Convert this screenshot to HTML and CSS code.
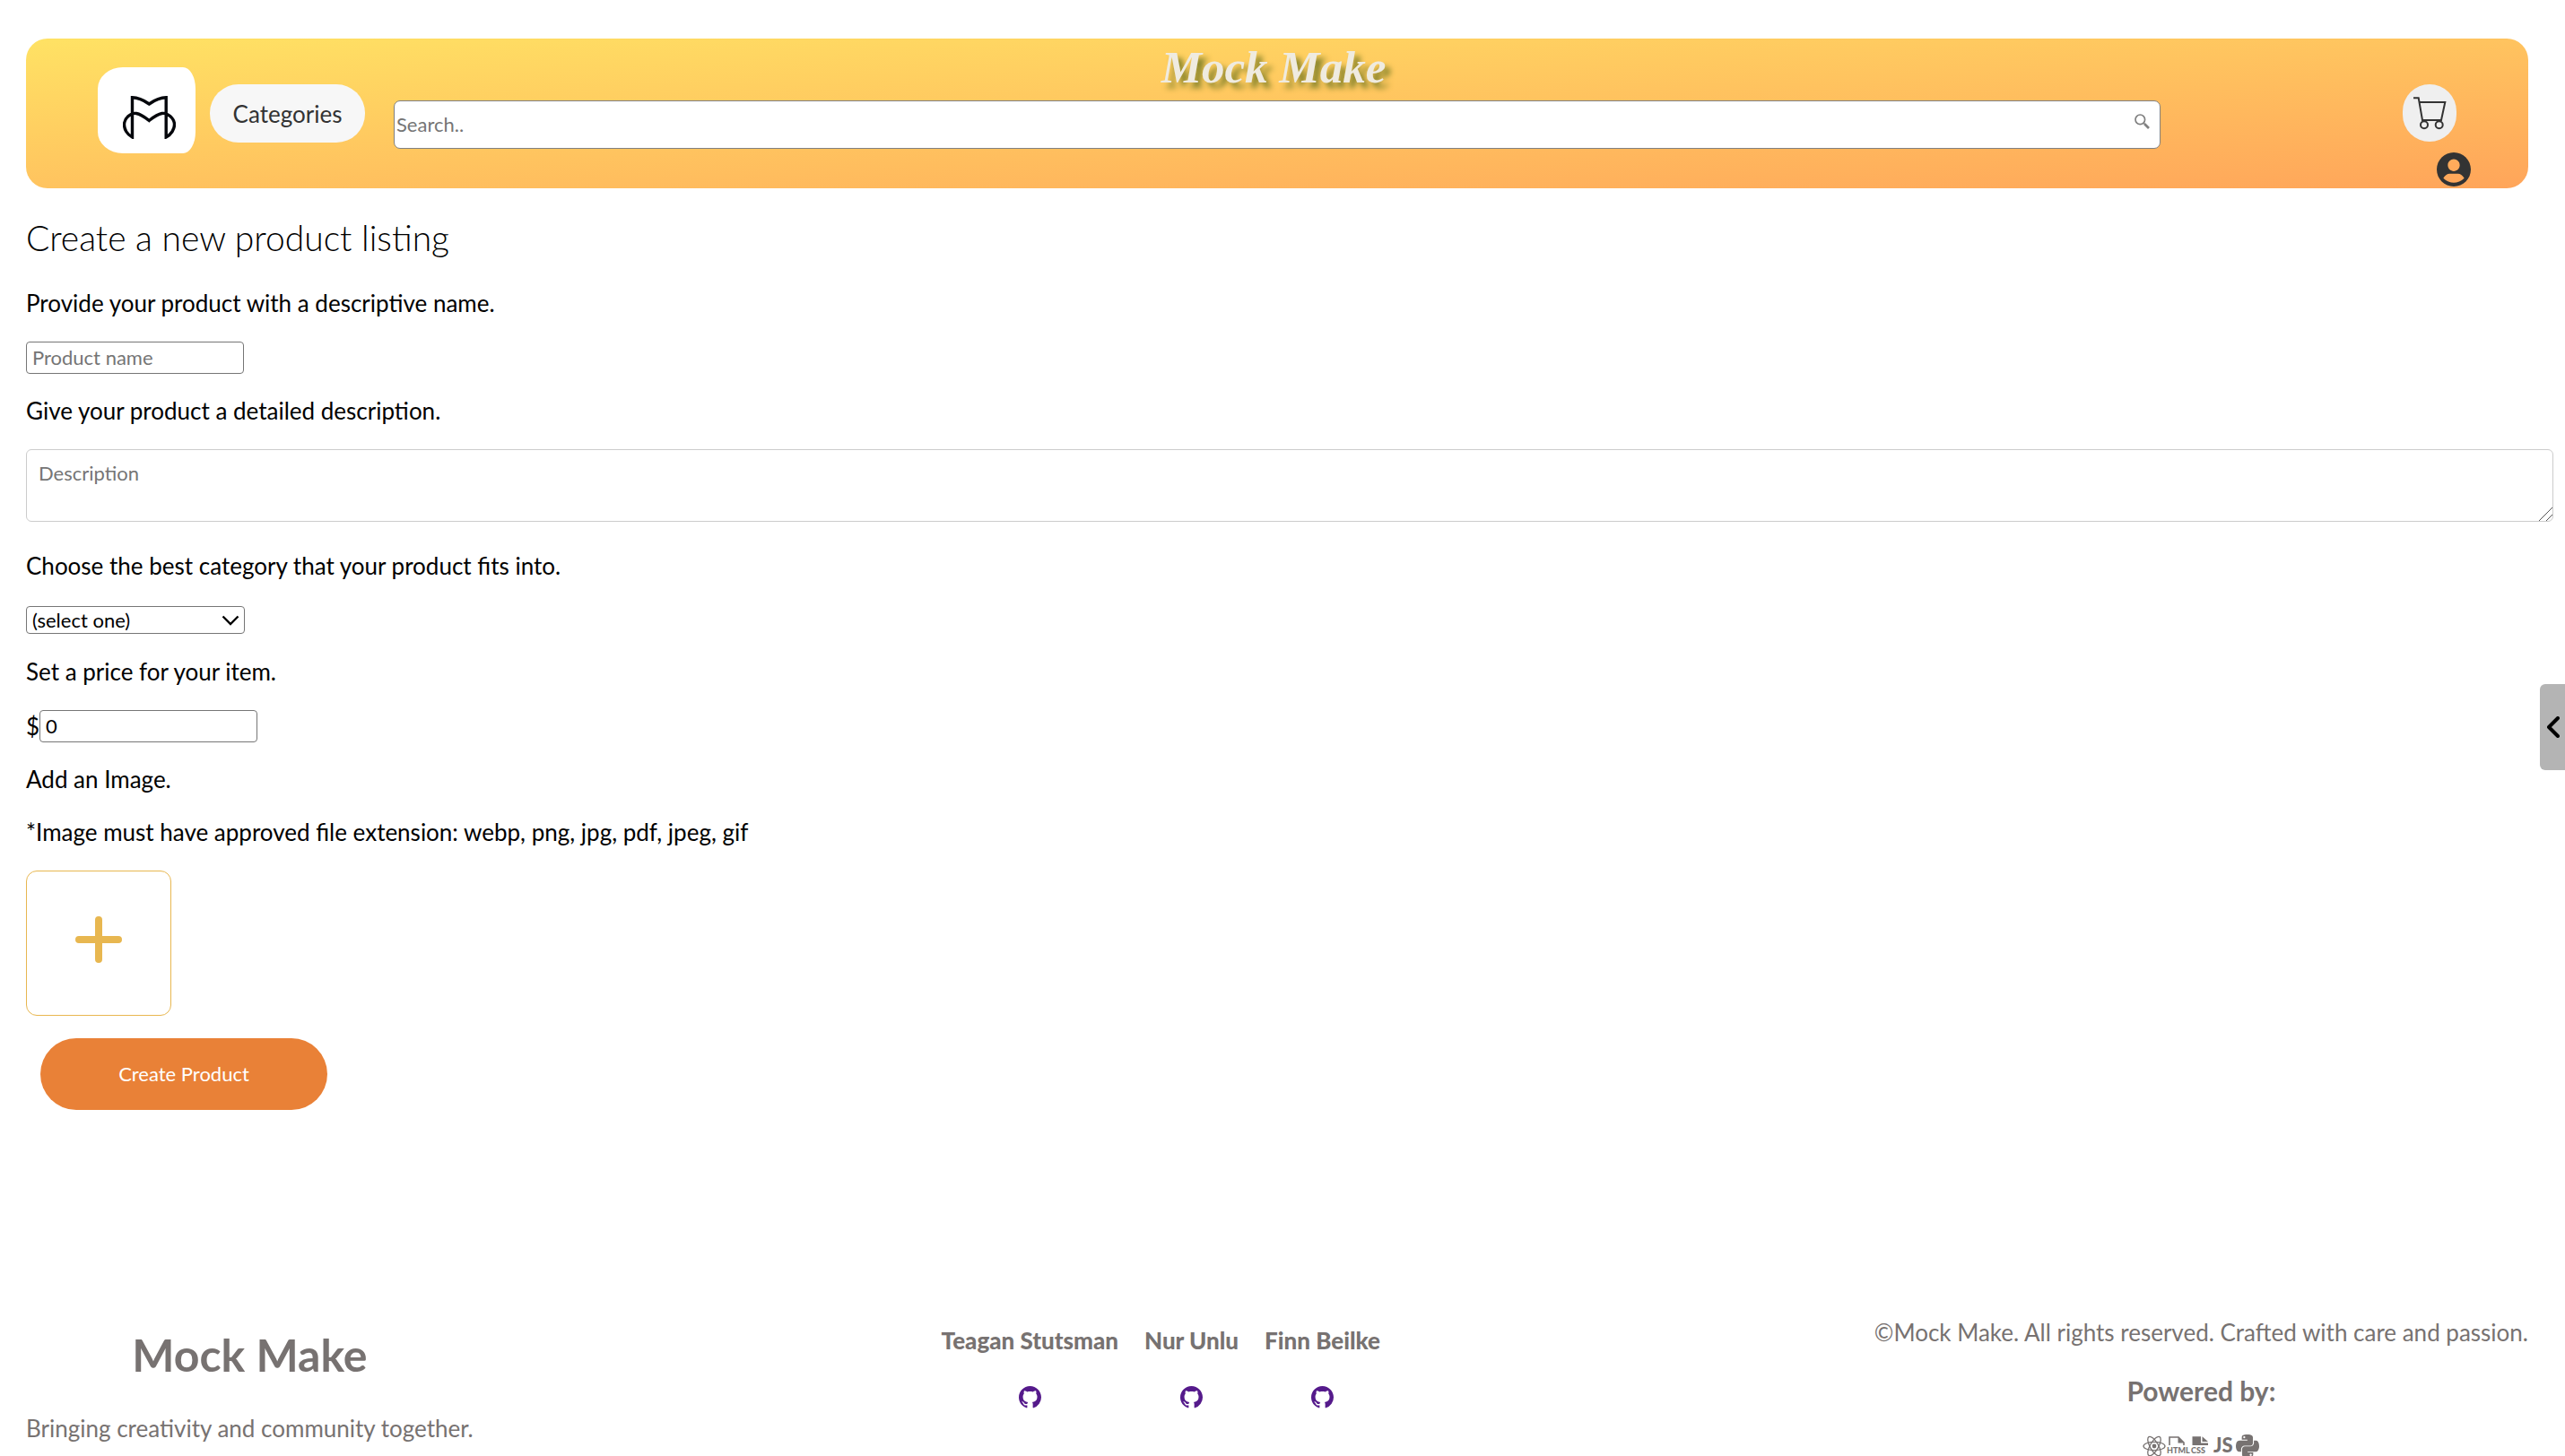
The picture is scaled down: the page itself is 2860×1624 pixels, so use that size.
FILE: index.html
```html
<!DOCTYPE html>
<html lang="en">
<head>
<meta charset="utf-8">
<title>Mock Make</title>
<link rel="stylesheet" href="styles.css">
</head>
<body>
<header class="topbar">
  <a class="logo" href="#" aria-label="Home">
    <svg width="59" height="48" viewBox="0 0 59 48" fill="none" stroke="#05070c" stroke-width="3.4"><path d="M10.5 46V1.8Q19 1.8 29.3 9Q39.500 1.800 48.200 1.800V46C54 43 57.500 37 57.500 32C57.500 25 50 18.500 43.500 19.500C38 20.500 35 23 29.300 27.500C23.500 23 20.500 20.500 15 19.500C8.500 18.500 1.500 25 1.500 32C1.500 37 4.500 43 10.500 46Z"/></svg>
  </a>
  <button class="categories" type="button">Categories</button>
  <div class="center">
    <div class="brand">Mock Make</div>
    <form class="search">
      <input type="search" placeholder="Search.." aria-label="Search">
      <button type="button" aria-label="Submit search">
        <svg width="17" height="17" viewBox="0 0 17 17" fill="none" stroke="#808080"><circle cx="6.300" cy="6.300" r="5.300" stroke-width="1.700"/><path d="M10 10l1.500 1.500" stroke-width="1.700"/><path d="M11.200 11.200L16 16" stroke-width="2.700"/></svg>
      </button>
    </form>
  </div>
  <div class="actions">
    <button class="cart" type="button" aria-label="Cart">
      <svg width="37" height="37" viewBox="0 0 37 37" fill="none" stroke="#333" stroke-width="2"><path d="M0 1.300H5.700L10 26H31L35.300 6H7"/><circle cx="12" cy="31.300" r="4"/><circle cx="28.700" cy="31.300" r="4"/></svg>
    </button>
    <a class="account" href="#" aria-label="Account">
      <svg width="38" height="38" viewBox="2 2 20 20" fill="#333"><path d="M12 2C6.480 2 2 6.480 2 12s4.480 10 10 10 10-4.480 10-10S17.520 2 12 2zm0 4c1.930 0 3.500 1.570 3.500 3.500S13.930 13 12 13s-3.500-1.570-3.500-3.500S10.070 6 12 6zm0 13.700c-2.030 0-4.400-.7-6.140-2.600C7 15.300 8.200 14.500 9.500 14.500h5c1.300 0 2.500.8 3.640 2.600C16.400 19 14.030 19.700 12 19.700z"/></svg>
    </a>
  </div>
</header>

<main>
  <h1>Create a new product listing</h1>
  <form class="listing">
    <div class="field">
      <label for="name">Provide your product with a descriptive name.</label>
      <input class="box" id="name" type="text" placeholder="Product name">
    </div>
    <div class="field">
      <label for="description">Give your product a detailed description.</label>
      <textarea id="description" placeholder="Description"></textarea>
    </div>
    <div class="field">
      <label for="category">Choose the best category that your product fits into.</label>
      <div class="picker">
        <select id="category"><option>(select one)</option></select>
        <svg width="20" height="12" viewBox="0 0 20 12" fill="none" stroke="#000" stroke-width="2.400"><path d="M1.500 1.500L10 10L18.500 1.500"/></svg>
      </div>
    </div>
    <div class="field">
      <label for="price">Set a price for your item.</label>
      <div class="price"><span>$</span><input class="box" id="price" type="text" inputmode="decimal" value="0"></div>
    </div>
    <div class="field">
      <label for="image">Add an Image.</label>
      <p>*Image must have approved file extension: webp, png, jpg, pdf, jpeg, gif</p>
      <button class="upload" id="image" type="button" aria-label="Add an image">
        <svg width="52" height="52" viewBox="0 0 52 52" stroke="#e8b750" stroke-width="8" stroke-linecap="round"><path d="M26 4V48M4 26H48"/></svg>
      </button>
    </div>
    <button class="create" type="submit">Create Product</button>
  </form>
</main>

<footer>
  <section class="about">
    <h2>Mock Make</h2>
    <p>Bringing creativity and community together.</p>
  </section>
  <ul class="team">
    <li><strong>Teagan Stutsman</strong><a href="#" aria-label="Teagan Stutsman on GitHub"><svg width="25" height="25" viewBox="0 0 16 16"><use href="#github"/></svg></a></li>
    <li><strong>Nur Unlu</strong><a href="#" aria-label="Nur Unlu on GitHub"><svg width="25" height="25" viewBox="0 0 16 16"><use href="#github"/></svg></a></li>
    <li><strong>Finn Beilke</strong><a href="#" aria-label="Finn Beilke on GitHub"><svg width="25" height="25" viewBox="0 0 16 16"><use href="#github"/></svg></a></li>
  </ul>
  <section class="powered">
    <p>©Mock Make. All rights reserved. Crafted with care and passion.</p>
    <h3>Powered by:</h3>
    <div class="stack">
      <svg viewBox="0 0 26 26" fill="none" stroke="currentColor" stroke-width="1.300"><circle cx="13" cy="13" r="2.400" fill="currentColor" stroke="none"/><ellipse cx="13" cy="13" rx="12" ry="4.600"/><ellipse cx="13" cy="13" rx="12" ry="4.600" transform="rotate(60 13 13)"/><ellipse cx="13" cy="13" rx="12" ry="4.600" transform="rotate(120 13 13)"/></svg>
      <svg viewBox="0 0 26 26" fill="currentColor"><path d="M4 12V3H14L20 9V12" fill="none" stroke="currentColor" stroke-width="1.600"/><path d="M13.500 3V9.500H20Z"/><text x="1" y="21" font-size="9">HTML</text></svg>
      <svg viewBox="0 0 26 26" fill="currentColor"><path d="M3.500 12V2.200H13V9.500H21V12Z"/><path d="M14.500 2.200L21 8H14.500Z"/><text x="2" y="21" font-size="9">CSS</text></svg>
      <svg viewBox="0 0 26 26" fill="currentColor"><text x="1" y="20" font-size="22">JS</text></svg>
      <svg viewBox="0 32 448 448" fill="currentColor"><path d="M439.800 200.500c-7.700-30.900-22.300-54.200-53.400-54.200h-40.100v47.400c0 36.800-31.200 67.800-66.800 67.800H172.700c-29.200 0-53.400 25-53.400 54.300v101.800c0 29 25.200 46 53.400 54.300 33.800 9.900 66.300 11.700 106.800 0 26.900-7.800 53.400-23.500 53.400-54.300v-40.700H226.200v-13.600h160.200c31.100 0 42.600-21.700 53.400-54.200 11.200-33.500 10.700-65.700 0-108.600zM286.200 404c11.100 0 20.100 9.100 20.100 20.300 0 11.300-9 20.400-20.100 20.400-11 0-20.100-9.200-20.100-20.400.1-11.300 9.100-20.300 20.100-20.300zM167.800 248.100h106.800c29.700 0 53.400-24.500 53.400-54.300V91.900c0-29-24.400-50.700-53.400-55.600-35.800-5.900-74.700-5.600-106.800.1-45.200 8-53.400 24.700-53.400 55.600v40.700h106.900v13.600h-147c-31.100 0-58.300 18.700-66.800 54.200-9.800 40.700-10.200 66.100 0 108.600 7.600 31.600 25.700 54.200 56.800 54.200H101v-48.800c0-35.300 30.500-66.400 66.800-66.400zm-6.700-142.600c-11.100 0-20.100-9.100-20.100-20.300.1-11.300 9-20.400 20.100-20.400 11 0 20.100 9.200 20.100 20.400s-9 20.300-20.100 20.300z"/></svg>
    </div>
  </section>
</footer>

<button class="drawer" type="button" aria-label="Open side panel">
  <svg width="14" height="24" viewBox="0 0 14 24" fill="none" stroke="#000" stroke-width="4" stroke-linecap="round" stroke-linejoin="round"><path d="M12 2L2 12L12 22"/></svg>
</button>

<svg width="0" height="0" class="defs" aria-hidden="true"><symbol id="github" viewBox="0 0 16 16"><path fill-rule="evenodd" d="M8 0C3.580 0 0 3.580 0 8c0 3.540 2.290 6.530 5.470 7.590.4.070.55-.17.55-.38 0-.19-.01-.82-.01-1.490-2.010.37-2.530-.49-2.690-.94-.09-.23-.48-.94-.82-1.130-.28-.15-.68-.52-.01-.53.63-.01 1.080.58 1.230.82.72 1.210 1.870.87 2.330.66.070-.52.28-.87.51-1.070-1.780-.2-3.640-.89-3.640-3.950 0-.87.31-1.590.82-2.150-.08-.2-.36-1.020.08-2.120 0 0 .67-.21 2.200.82.64-.18 1.320-.27 2-.27s1.360.09 2 .27c1.530-1.040 2.200-.82 2.200-.82.44 1.100.16 1.920.08 2.120.51.56.82 1.270.82 2.150 0 3.070-1.870 3.750-3.650 3.950.29.25.54.73.54 1.480 0 1.070-.01 1.930-.01 2.200 0 .21.15.46.55.38A8.010 8.010 0 0 0 16 8c0-4.420-3.580-8-8-8z"/></symbol></svg>
</body>
</html>
```
FILE: styles.css
```css
* { box-sizing: border-box; }

html { overflow: hidden; }

body {
  height: 100vh;
  margin: 0;
  padding-top: 43px;
  overflow-y: auto;
  scrollbar-width: none;
  background: #fff;
  color: #000;
  font: 26px/32px Lato, "Open Sans", sans-serif;
}

h1, h2, h3, p, ul { margin: 0; padding: 0; }
svg { display: block; flex: none; }
button, input, select, textarea { font: inherit; margin: 0; }
button { border: 0; padding: 0; cursor: pointer; }
::placeholder { color: #757575; opacity: 1; }
.defs { position: absolute; }

/* Header */
.topbar {
  display: flex;
  align-items: flex-start;
  height: 167px;
  margin: 0 41px 0 29px;
  padding: 0 64px 0 80px;
  border-radius: 24px;
  background: linear-gradient(to bottom right, #ffe264, #ffa55a);
}
.logo {
  display: flex;
  justify-content: center;
  width: 109px;
  height: 96px;
  margin-top: 32px;
  padding: 32px 0 0 6px;
  border-radius: 28px 14px 14px 28px / 24px;
  background: #fff;
}
.categories {
  width: 173px;
  height: 65px;
  margin: 51px 32px 0 16px;
  border-radius: 32px;
  background: #f7f7f7;
  color: #333;
}
.center { flex: 1; margin-right: 270px; }
.brand {
  height: 69px;
  padding-right: 8px;
  font: italic bold 51px/64px "Brush Script MT", "Liberation Serif", cursive;
  text-align: center;
  color: #efebe0;
  text-shadow: 6px 6px 6px #808028;
}
.search {
  display: flex;
  height: 54px;
  padding: 0 11px 0 2px;
  border: 1px solid #808080;
  border-radius: 7px;
  background: #fff;
}
.search input {
  flex: 1;
  border: 0;
  padding: 0;
  background: none;
  font-size: 22px;
  outline: 0;
}
.search button { height: 17px; margin-top: 14px; background: none; }
.actions { width: 76px; padding-top: 51px; }
.cart {
  display: grid;
  place-items: center;
  width: 60px;
  height: 64px;
  border-radius: 30px;
  background: #efefef;
}
.account { display: block; width: 38px; margin: 12px 0 0 38px; }

/* Listing form */
main { padding: 31px 13px 0 29px; }
h1 { margin-bottom: 33px; font-size: 39px; line-height: 48px; font-weight: 300; }
.listing { display: flex; flex-direction: column; align-items: flex-start; gap: 25px; }
.field { display: flex; flex-direction: column; align-items: flex-start; gap: 27px; width: 100%; }
.box {
  width: 243px;
  height: 36px;
  padding: 0 6px 2px;
  border: 1px solid #767676;
  border-radius: 4px;
  background: #fff;
  font-size: 22px;
}
textarea {
  width: 100%;
  height: 81px;
  margin-bottom: 8px;
  padding: 10px 13px;
  border: 1px solid #ccc;
  border-radius: 6px;
  font-size: 22px;
}
textarea::-webkit-resizer {
  background: linear-gradient(135deg, transparent 47%, #555 47% 53%, transparent 53% 74%, #555 74% 80%, transparent 80%);
}
.picker { display: grid; align-items: center; width: 244px; margin: 2px 0 1px; }
.picker > * { grid-area: 1 / 1; }
.picker select {
  height: 31px;
  padding: 0 6px;
  border: 1px solid #767676;
  border-radius: 4px;
  background: #fff;
  color: #000;
  font-size: 22px;
  line-height: 29px;
  appearance: none;
}
.picker svg { justify-self: end; margin-right: 6px; pointer-events: none; }
.price { display: flex; align-items: center; }
.upload {
  width: 162px;
  height: 162px;
  padding: 0 0 8px 54px;
  border: 1px solid #e8b750;
  border-radius: 12px;
  background: #fff;
}
.create {
  width: 320px;
  height: 80px;
  margin-left: 16px;
  border-radius: 40px;
  background: #e98137;
  color: #fff;
  font-size: 22px;
}

/* Footer */
footer {
  display: flex;
  justify-content: space-between;
  align-items: flex-start;
  margin-top: 232px;
  padding: 0 41px 0 29px;
  color: #777271;
}
.about { padding-top: 11px; text-align: center; }
h2 { margin-bottom: 36px; font-size: 50px; line-height: 60px; }
.team { display: flex; padding-top: 9px; list-style: none; }
.team li { display: flex; flex-direction: column; align-items: center; gap: 35px; margin-right: 29px; }
.team strong { font-weight: 900; }
.team a { color: #551a8b; fill: currentColor; }
h3 { margin: 31px 0; font-size: 30px; line-height: 36px; }
.powered { text-align: center; }
.stack { display: flex; justify-content: center; }
.stack svg { width: 26px; height: 26px; overflow: visible; font-family: Lato, sans-serif; font-weight: 900; }

/* Side panel handle */
.drawer {
  position: fixed;
  top: 763px;
  right: 0;
  display: grid;
  place-items: center;
  width: 28px;
  height: 96px;
  padding-left: 2px;
  border-radius: 6px 0 0 6px;
  background: #b4b4b4;
}
```
